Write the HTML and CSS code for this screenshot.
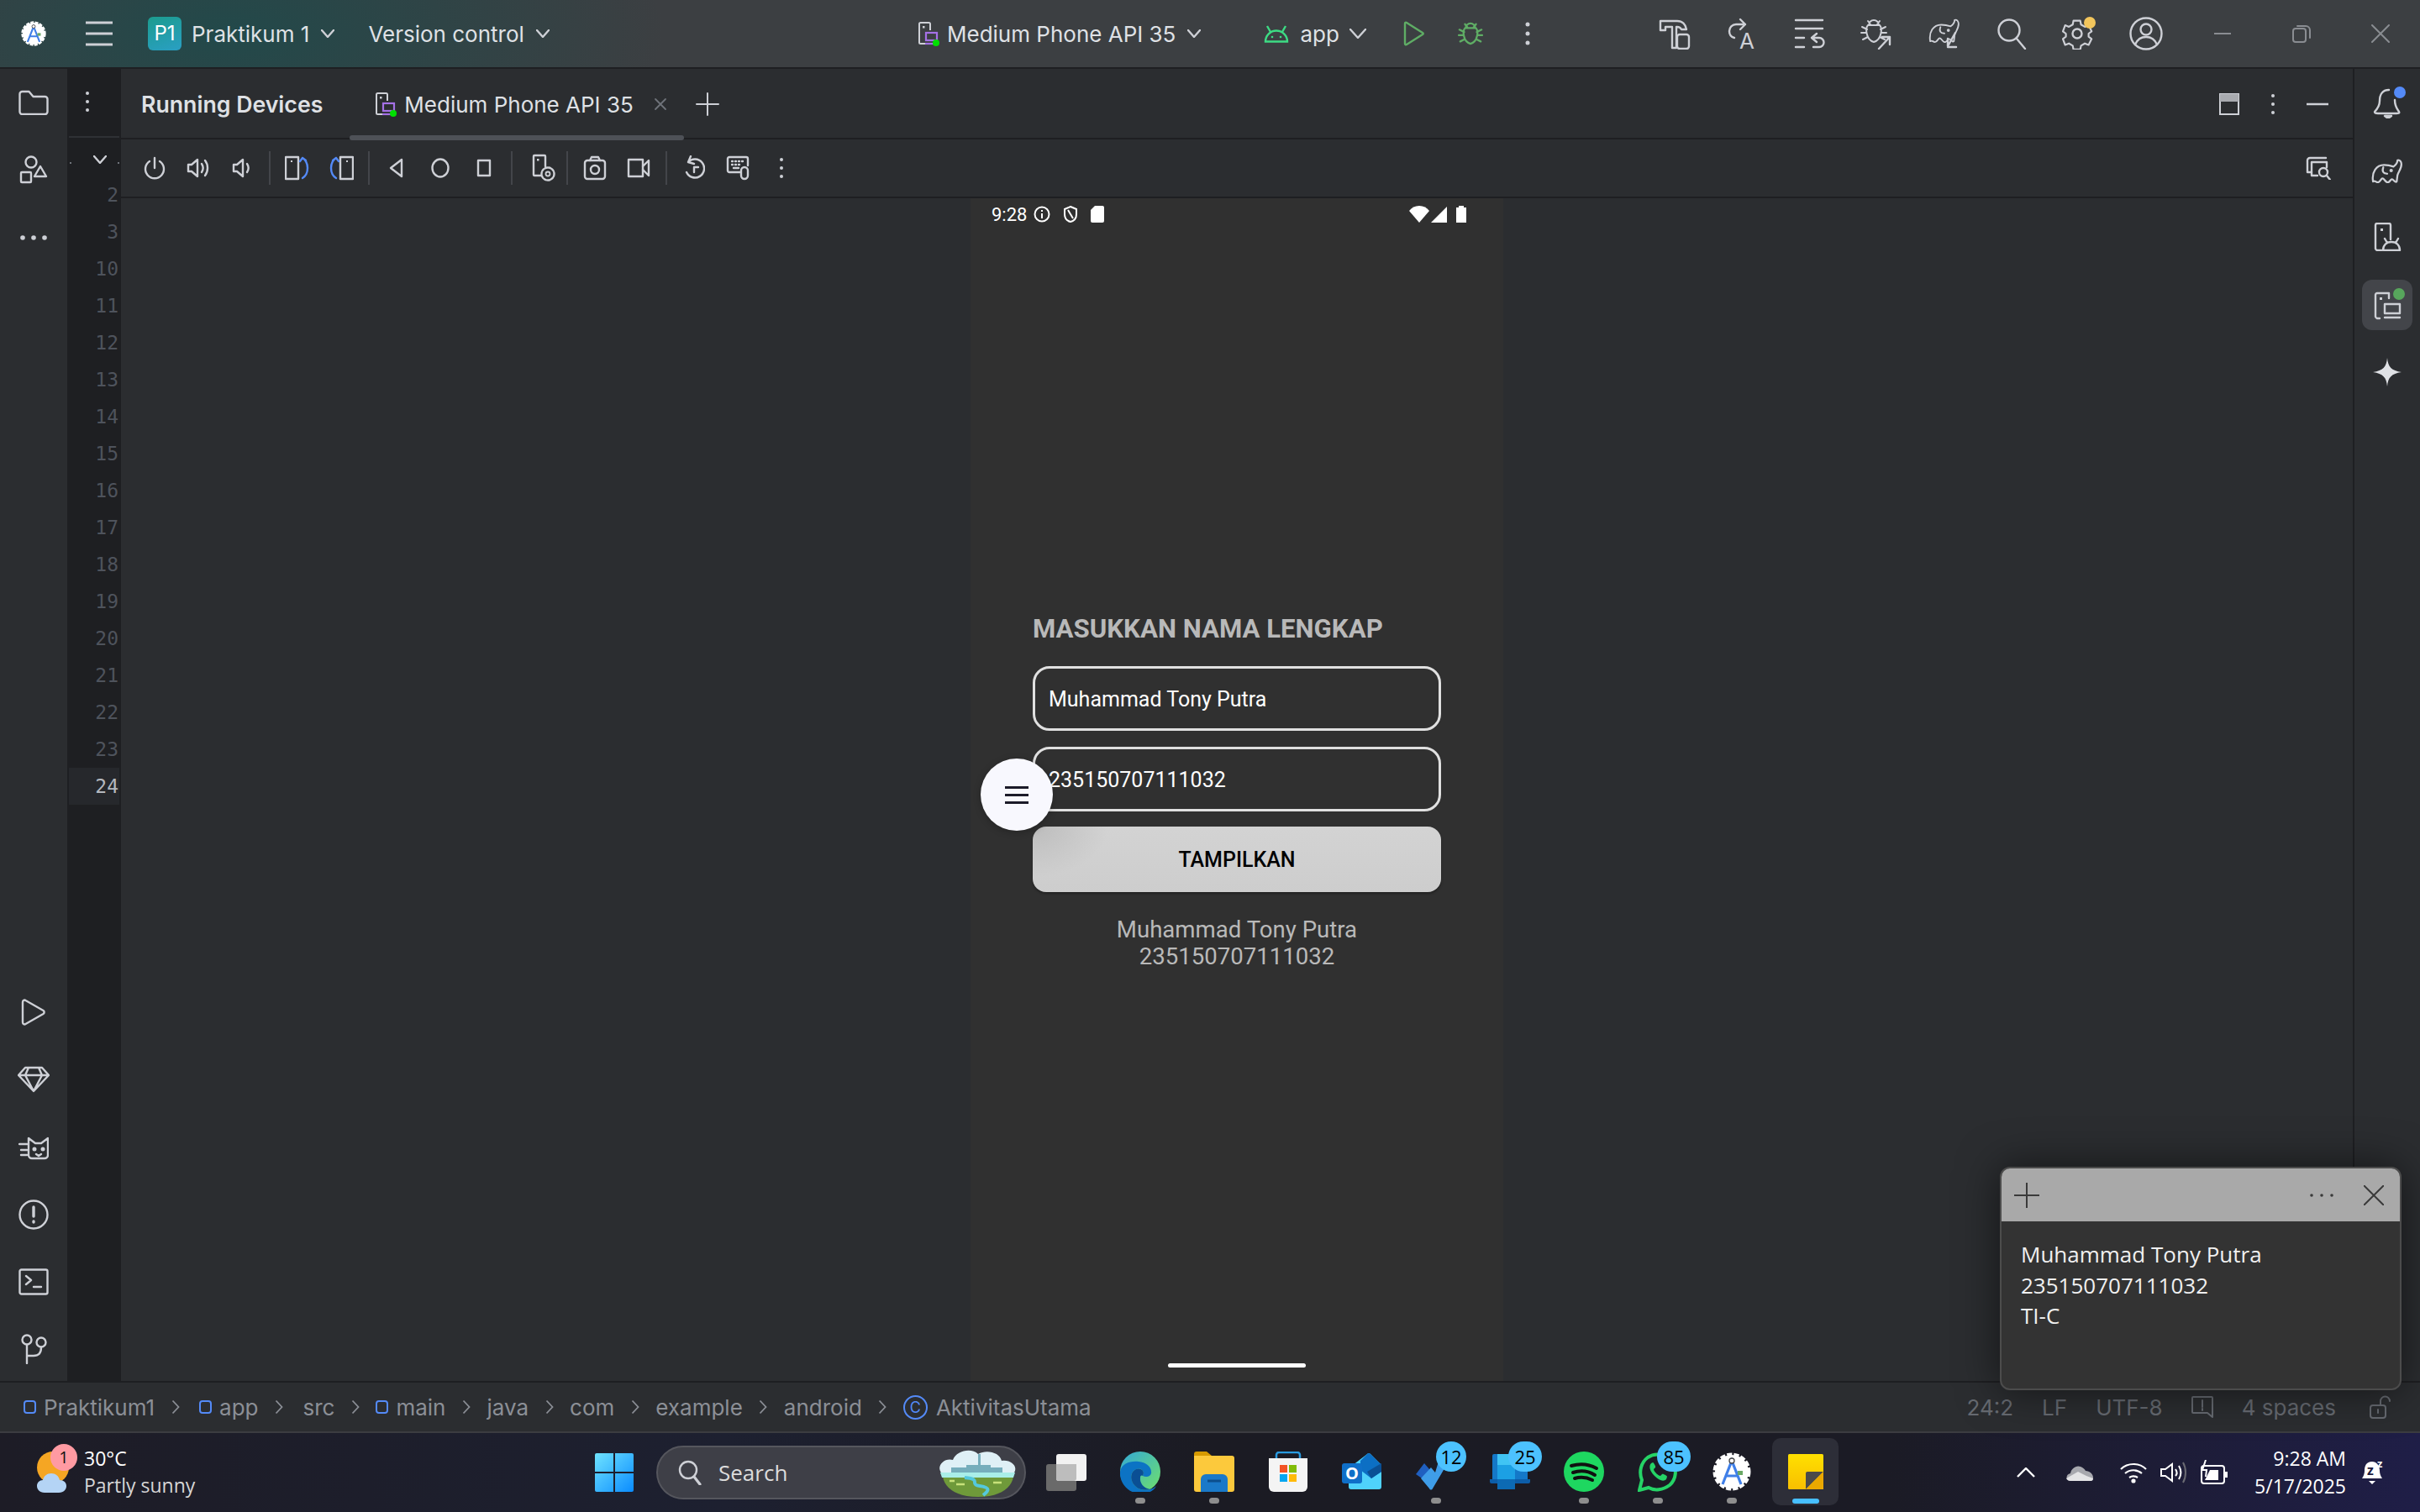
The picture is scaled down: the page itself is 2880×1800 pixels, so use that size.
FILE: index.html
```html
<!DOCTYPE html>
<html lang="en">
<head>
  <meta charset="UTF-8" />
  <title>Praktikum 1 - Running Devices</title>
  <link rel="stylesheet" href="styles.css">
</head>
<body>
  <svg class="defs" width="0" height="0">
    <symbol id="studio" viewBox="0 0 46 46">
      <circle cx="23" cy="23" r="20" fill="#fff" stroke="#fff" stroke-width="5" stroke-dasharray="6 2"/>
      <path d="M12 38 23 10l11 28M16 28h14" fill="none" stroke="#3f7fe8" stroke-width="3.200"/>
      <circle cx="23" cy="10" r="3" fill="#fff" stroke="#444" stroke-width="1.300"/>
      <rect x="30" y="22" width="6" height="5" fill="#6aa865"/>
    </symbol>
    <symbol id="device" viewBox="0 0 26 30">
      <path d="M9 27H3.500A1.500 1.500 0 0 1 2 25.500V3.500A1.500 1.500 0 0 1 3.500 2h10A1.500 1.500 0 0 1 15 3.500V11" fill="none" stroke="#ced0d6" stroke-width="2"/>
      <rect x="6" y="6" width="2.500" height="2.500" fill="#ced0d6"/>
      <rect x="10" y="14" width="13" height="9" fill="none" stroke="#a571e6" stroke-width="2.200"/>
      <path d="M9 27h11" stroke="#a571e6" stroke-width="2.200"/>
      <circle cx="22" cy="26" r="4" fill="#00e000"/>
    </symbol>
    <symbol id="gradle" viewBox="0 0 40 32">
      <path d="M2 30C0 18 6 9 16 9c5 0 9 1 12 2 3-2 5-5 5-8 3-1 5 2 5 5 0 6-4 10-5 14l-1 8c-2 2-4-3-6-3s-3 5-6 4-4-5-6-5-3 5-6 5-3-3-6-1z"/>
      <path d="M15 12c-2 5 0 8 5 8"/>
      <circle cx="25" cy="16" r="1"/>
    </symbol>
    <symbol id="bugbody" viewBox="0 0 32 32">
      <path d="M10 9a6 6 0 0 1 12 0zM9 9h14c3 3 3 17-7 20C6 26 6 12 9 9zM9 4l3 4M23 4l-3 4M2 11l6 3M30 11l-6 3M1 18h6M31 18h-6M3 26l6-3M29 26l-6-3"/>
    </symbol>
    <symbol id="gt" viewBox="0 0 10 18">
      <path d="M1.500 1.500 8.500 9l-7 7.500" fill="none" stroke="#8b8f96" stroke-width="1.800"/>
    </symbol>
  </svg>

  <header class="titlebar">
    <div class="tb-left">
      <svg class="tb-logo" width="30" height="30"><use href="#studio"/></svg>
      <svg class="ic tb-menu" width="32" height="30" viewBox="0 0 32 30"><path d="M0 2h32M0 15h32M0 28h32" stroke-width="3"/></svg>
      <span class="p1">P1</span>
      <span class="tb-text tb-project">Praktikum 1</span>
      <svg class="ic chev" width="16" height="10" viewBox="0 0 16 10"><path d="M1 1l7 8 7-8"/></svg>
      <span class="tb-text tb-vcs">Version control</span>
      <svg class="ic chev" width="16" height="10" viewBox="0 0 16 10"><path d="M1 1l7 8 7-8"/></svg>
    </div>
    <div class="tb-center">
      <svg width="26" height="30"><use href="#device"/></svg>
      <span class="tb-text tb-device">Medium Phone API 35</span>
      <svg class="ic chev" width="16" height="10" viewBox="0 0 16 10"><path d="M1 1l7 8 7-8"/></svg>
      <svg class="android" width="30" height="22" viewBox="0 0 30 22"><path d="M2 20.500a13 13 0 0 1 26 0zM8 9 4 2M22 9l4-7" fill="none" stroke="#3ddc84" stroke-width="2.400"/><circle cx="10" cy="15" r="1.300" fill="#3ddc84"/><circle cx="20" cy="15" r="1.300" fill="#3ddc84"/></svg>
      <span class="tb-text tb-app">app</span>
      <svg class="ic chev chev-app" width="20" height="12" viewBox="0 0 20 12"><path d="M1 1l9 10 9-10"/></svg>
      <svg class="ic run" width="26" height="30" viewBox="0 0 26 30"><path d="M2 3c0-1 1-1.500 2-1l19 12c1 .5 1 1.500 0 2L4 28c-1 .5-2 0-2-1z"/></svg>
      <svg class="ic bug" width="30" height="30"><use href="#bugbody"/></svg>
      <svg class="dots-v tb-more" width="6" height="28" viewBox="0 0 6 28"><circle cx="3" cy="3" r="2.500"/><circle cx="3" cy="14" r="2.500"/><circle cx="3" cy="25" r="2.500"/></svg>
    </div>
    <div class="tb-right">
      <svg class="ic act" width="38" height="38" viewBox="0 0 38 38"><path d="M2 4h20c6 0 10 4 11 10h-6c-1-2-3-3-5-3h-1v25h-5V11H8v4H2z"/><rect x="22" y="20" width="14" height="17" rx="3"/></svg>
      <svg class="ic act" width="38" height="38" viewBox="0 0 38 38"><path d="M17 2l6 6-6 6M23 8H12a8 8 0 0 0-8 8c0 4 2 7 6 8"/><text class="ic-letter" x="16" y="37">A</text></svg>
      <svg class="ic act" width="38" height="38" viewBox="0 0 38 38"><path d="M3 3h32M3 13h32M3 24h10M3 35h10M28 19l-6 5 6 5M22 24h9a5 5 0 0 1 0 11h-7"/></svg>
      <svg class="ic act thin" width="38" height="38" viewBox="0 0 38 38"><use href="#bugbody" width="32" height="32"/><path d="M22 37 35 23M26 23h9v9" stroke-width="2.400"/></svg>
      <svg class="ic act thin" width="40" height="38" viewBox="0 0 40 38"><use href="#gradle" width="40" height="30"/><path d="M33 18 24 34M24 25v10h10" stroke-width="2.400"/></svg>
      <svg class="ic act" width="36" height="38" viewBox="0 0 36 38"><circle cx="15" cy="15" r="12.500"/><path d="M24 25l10 12"/></svg>
      <span class="gear">
        <svg class="ic" width="38" height="38" viewBox="0 0 38 38"><path d="M14 3h9l1 5 5 3 5-2 4 8-4 3v4l4 3-4 8-5-2-5 3-1 5h-9l-1-5-5-3-5 2-3-8 4-3v-4l-4-3 3-8 5 2 5-3z" transform="translate(1 1) scale(.9)"/><circle cx="18" cy="19" r="5.500"/></svg>
        <i class="dot-amber"></i>
      </span>
      <svg class="ic user" width="40" height="40" viewBox="0 0 40 40"><circle cx="20" cy="20" r="18.500"/><circle cx="20" cy="15" r="6.500"/><path d="M7 33c3-7 8-9 13-9s10 2 13 9"/></svg>
      <svg class="ic win win-min" width="20" height="2" viewBox="0 0 20 2"><path d="M0 1h20" stroke-width="2"/></svg>
      <svg class="ic win" width="22" height="22" viewBox="0 0 22 22"><rect x="1" y="5" width="15" height="16" rx="3" stroke-width="2"/><path d="M6 2h10a5 5 0 0 1 5 5v9" stroke-width="2"/></svg>
      <svg class="ic win" width="22" height="22" viewBox="0 0 22 22"><path d="M1 1l20 20M21 1 1 21" stroke-width="2"/></svg>
    </div>
  </header>

  <div class="workspace">
    <nav class="strip">
      <div class="strip-top">
        <svg class="ic" width="36" height="30" viewBox="0 0 36 30"><path d="M1.500 5a3 3 0 0 1 3-3h8l5 6h14a3 3 0 0 1 3 3v15a3 3 0 0 1-3 3h-27a3 3 0 0 1-3-3z"/></svg>
        <svg class="ic" width="34" height="34" viewBox="0 0 34 34"><circle cx="14" cy="8" r="6.500"/><rect x="2" y="20" width="12" height="12" rx="1"/><path d="M25 13l7 12H18z"/></svg>
        <svg class="dots-h" width="32" height="6" viewBox="0 0 32 6"><circle cx="3" cy="3" r="2.800"/><circle cx="16" cy="3" r="2.800"/><circle cx="29" cy="3" r="2.800"/></svg>
      </div>
      <div class="strip-bottom">
        <svg class="ic" width="30" height="32" viewBox="0 0 30 32"><path d="M2 4c0-2 2-3 3.500-2l21 12c1.500 1 1.500 3 0 4L5.500 30C4 31 2 30 2 28z"/></svg>
        <svg class="ic" width="38" height="32" viewBox="0 0 38 32"><path d="M9 2h20l8 9-18 19L1 11zM1 11h36M13 2l-4 9 10 19 10-19-4-9"/></svg>
        <svg class="ic" width="36" height="28" viewBox="0 0 36 28"><path d="M12 2v20a4 4 0 0 0 4 4h15a4 4 0 0 0 4-4V2l-8 6H20zM1 9h9M3 16h7M3 22h7M21 21l3 2 3-2"/><circle cx="19" cy="15" r="1.300"/><circle cx="29" cy="15" r="1.300"/></svg>
        <svg class="ic" width="36" height="36" viewBox="0 0 36 36"><circle cx="18" cy="18" r="16.500"/><path d="M18 9v11M18 26v1" stroke-width="3.400"/></svg>
        <svg class="ic" width="36" height="32" viewBox="0 0 36 32"><rect x="1.500" y="1.500" width="33" height="29" rx="2"/><path d="M9 9l6 5-6 5M18 22h9"/></svg>
        <svg class="ic" width="32" height="36" viewBox="0 0 32 36"><circle cx="8" cy="7" r="5.500"/><circle cx="25" cy="10" r="5.500"/><path d="M8 13v22M8 26h8c6 0 9-4 9-10"/></svg>
      </div>
    </nav>

    <aside class="gutter">
      <div class="gutter-top">
        <svg class="dots-v" width="6" height="26" viewBox="0 0 6 26"><circle cx="3" cy="3" r="2"/><circle cx="3" cy="13" r="2"/><circle cx="3" cy="23" r="2"/></svg>
      </div>
      <div class="gutter-fold">
        <i class="speck"></i>
        <svg class="ic fold-chev" width="16" height="10" viewBox="0 0 16 10"><path d="M1 1l7 8 7-8"/></svg>
        <i class="speck"></i>
      </div>
      <div class="line-no">2</div>
      <div class="line-no">3</div>
      <div class="line-no">10</div>
      <div class="line-no">11</div>
      <div class="line-no">12</div>
      <div class="line-no">13</div>
      <div class="line-no">14</div>
      <div class="line-no">15</div>
      <div class="line-no">16</div>
      <div class="line-no">17</div>
      <div class="line-no">18</div>
      <div class="line-no">19</div>
      <div class="line-no">20</div>
      <div class="line-no">21</div>
      <div class="line-no">22</div>
      <div class="line-no">23</div>
      <div class="line-no current">24</div>
    </aside>

    <main class="panel">
      <div class="tabs">
        <span class="tabs-title">Running Devices</span>
        <div class="tab">
          <svg width="26" height="30"><use href="#device"/></svg>
          <span class="tab-name">Medium Phone API 35</span>
          <svg class="ic tab-close" width="16" height="16" viewBox="0 0 16 16"><path d="M2 2l12 12M14 2 2 14" stroke-width="1.800"/></svg>
          <i class="tab-bar"></i>
        </div>
        <svg class="ic tab-add" width="28" height="28" viewBox="0 0 28 28"><path d="M14 1v26M1 14h26" stroke-width="2"/></svg>
        <div class="tabs-right">
          <svg width="24" height="26" viewBox="0 0 24 26"><rect x="1" y="1" width="22" height="24" fill="none" stroke="#ced0d6" stroke-width="2"/><rect x="1" y="1" width="22" height="9" fill="#a8aaaf"/></svg>
          <svg class="dots-v" width="6" height="26" viewBox="0 0 6 26"><circle cx="3" cy="3" r="2"/><circle cx="3" cy="13" r="2"/><circle cx="3" cy="23" r="2"/></svg>
          <svg class="ic" width="26" height="4" viewBox="0 0 26 4"><path d="M0 2h26" stroke-width="2.400"/></svg>
        </div>
      </div>

      <div class="toolbar">
        <span class="tool"><svg class="ic" width="26" height="28" viewBox="0 0 26 28"><path d="M13 2v12M7 6a11 11 0 1 0 12 0"/></svg></span>
        <span class="tool"><svg class="ic" width="28" height="28" viewBox="0 0 28 28"><path d="M2 10h4l7-6v20l-7-6H2zM18 9c2 3 2 7 0 10M22 5c4 5 4 13 0 18"/></svg></span>
        <span class="tool"><svg class="ic" width="24" height="28" viewBox="0 0 24 28"><path d="M2 10h4l7-6v20l-7-6H2zM18 9c2 3 2 7 0 10"/></svg></span>
        <i class="sep"></i>
        <span class="tool"><svg class="ic" width="30" height="30" viewBox="0 0 30 30"><rect x="1" y="2" width="15" height="26"/><rect class="fill" x="7" y="6" width="2" height="2"/><path class="blue" d="M21 3c8 5 8 19 0 24M18 7l3-4 4 3"/></svg></span>
        <span class="tool"><svg class="ic" width="30" height="30" viewBox="0 0 30 30"><rect x="14" y="2" width="15" height="26"/><rect class="fill" x="21" y="6" width="2" height="2"/><path class="blue" d="M9 3C1 8 1 22 9 27M12 7 9 3 5 6"/></svg></span>
        <i class="sep"></i>
        <span class="tool"><svg class="ic" width="18" height="24" viewBox="0 0 18 24"><path d="M15 2 2 12l13 10z"/></svg></span>
        <span class="tool"><svg class="ic" width="22" height="26" viewBox="0 0 22 26"><ellipse cx="11" cy="13" rx="9.500" ry="10.500"/></svg></span>
        <span class="tool"><svg class="ic" width="18" height="22" viewBox="0 0 18 22"><rect x="2" y="2" width="14" height="18"/></svg></span>
        <i class="sep"></i>
        <span class="tool tool-shift"><svg class="ic" width="28" height="34" viewBox="0 0 28 34"><path d="M11 26H3a1 1 0 0 1-1-1V3a1 1 0 0 1 1-1h12a1 1 0 0 1 1 1v12"/><rect class="fill" x="6" y="6" width="2.500" height="2.500"/><circle cx="19" cy="24" r="2.500" stroke-width="1.800"/><circle cx="19" cy="24" r="7.500" stroke-dasharray="3 1.500" stroke-width="2.400"/></svg></span>
        <i class="sep"></i>
        <span class="tool"><svg class="ic" width="28" height="30" viewBox="0 0 28 30"><rect x="2" y="6" width="24" height="22" rx="3"/><path d="M8 6l2-4h8l2 4"/><circle cx="14" cy="17" r="5"/></svg></span>
        <span class="tool"><svg class="ic" width="28" height="24" viewBox="0 0 28 24"><rect x="2" y="2" width="17" height="20"/><path d="M19 10l7-7v18l-7-7"/></svg></span>
        <i class="sep"></i>
        <span class="tool"><svg class="ic" width="26" height="30" viewBox="0 0 26 30"><path d="M6 8a11 11 0 1 1-2 12M9 1 6 8l7 2M13 20v-6h5"/></svg></span>
        <span class="tool"><svg class="ic" width="28" height="30" viewBox="0 0 28 30"><path d="M17 20H4a2 2 0 0 1-2-2V4a2 2 0 0 1 2-2h20a2 2 0 0 1 2 2v8"/><path d="M7 7h1M11 7h1M15 7h1M19 7h1M7 11h1M11 11h1M15 11h1M9 15h6"/><rect x="18" y="14" width="8" height="14" rx="4"/></svg></span>
        <span class="tool"><svg class="dots-v" width="6" height="26" viewBox="0 0 6 26"><circle cx="3" cy="3" r="2"/><circle cx="3" cy="13" r="2"/><circle cx="3" cy="23" r="2"/></svg></span>
        <svg class="ic toolbar-end" width="30" height="28" viewBox="0 0 30 28"><path d="M7 19H2V5a3 3 0 0 1 3-3h19M7 7h18v6M7 7v16h7"/><circle cx="21" cy="19" r="5"/><path d="M25 23l4 5"/></svg>
      </div>

      <div class="stage">
        <section class="phone">
          <div class="phone-status">
            <span class="phone-time">9:28</span>
            <svg class="phone-ic" width="20" height="20" viewBox="0 0 20 20"><circle cx="10" cy="10" r="8.500" fill="none" stroke="#fff" stroke-width="2"/><path d="M10 9v6M10 5v2" stroke="#fff" stroke-width="2"/></svg>
            <svg class="phone-ic" width="18" height="20" viewBox="0 0 18 20"><path d="M9 1l7 3v6c0 5-3 8-7 9-4-1-7-4-7-9V4zM6 5l6 10" fill="none" stroke="#fff" stroke-width="2"/></svg>
            <svg class="phone-ic" width="16" height="20" viewBox="0 0 16 20"><path d="M5 0h9a2 2 0 0 1 2 2v16a2 2 0 0 1-2 2H2a2 2 0 0 1-2-2V5z" fill="#fff"/></svg>
            <svg class="phone-ic phone-wifi" width="24" height="20" viewBox="0 0 24 20"><path d="M0 6c3-4 7-6 12-6s9 2 12 6L12 20z" fill="#fff"/></svg>
            <svg class="phone-ic phone-signal" width="19" height="19" viewBox="0 0 19 19"><path d="M19 0v19H0z" fill="#fff"/></svg>
            <svg class="phone-ic phone-batt" width="12" height="20" viewBox="0 0 12 20"><path d="M3 2V0h6v2h3v18H0V2z" fill="#fff"/></svg>
          </div>
          <form class="form">
            <h1 class="form-title">MASUKKAN NAMA LENGKAP</h1>
            <div class="field">Muhammad Tony Putra</div>
            <div class="field">235150707111032</div>
            <div class="btn">TAMPILKAN</div>
            <p class="result">Muhammad Tony Putra<br>235150707111032</p>
          </form>
          <i class="home-bar"></i>
          <button class="fab" type="button"><i></i><i></i><i></i></button>
        </section>
      </div>
    </main>

    <nav class="rstrip">
      <span class="rs-item rs-bell">
        <svg class="ic" width="36" height="38" viewBox="0 0 36 38"><path d="M20 4c-8 0-11 6-11 13 0 6-3 10-6 13 0 2 2 2 4 2h22c2 0 4 0 3-2-2-3-5-6-5-14M15 35h8l-4 3z"/></svg>
        <i class="rs-dot blue-dot"></i>
      </span>
      <svg class="ic rs-item" width="40" height="30"><use href="#gradle"/></svg>
      <svg class="ic rs-item" width="34" height="34" viewBox="0 0 34 34"><path d="M10 33H5a3 3 0 0 1-2-2V3a2 2 0 0 1 2-2h14a2 2 0 0 1 2 2v17"/><rect class="fill" x="9" y="7" width="3" height="3"/><path d="M12 33c0-6 4-10 10-10s10 4 10 10zM17 24l-3-5M27 24l3-5"/></svg>
      <span class="rs-item rs-active">
        <svg class="ic" width="34" height="36" viewBox="0 0 34 36"><path d="M8 34H5a3 3 0 0 1-2-2V6a2 2 0 0 1 2-2h14v6"/><rect class="fill" x="8" y="9" width="3" height="3"/><rect x="14" y="17" width="18" height="11"/><path d="M14 33h18"/></svg>
        <i class="rs-dot green-dot"></i>
      </span>
      <svg class="rs-item rs-star" width="34" height="34" viewBox="0 0 34 34"><path d="M17 0c1 11 5 15 17 17-12 2-16 6-17 17-1-11-5-15-17-17 12-2 16-6 17-17z" fill="#dfe1e5"/></svg>
    </nav>
  </div>

  <footer class="statusbar">
    <div class="crumbs">
      <span class="crumb"><i class="mod"></i>Praktikum1</span><svg width="10" height="18"><use href="#gt"/></svg>
      <span class="crumb"><i class="mod"></i>app</span><svg width="10" height="18"><use href="#gt"/></svg>
      <span class="crumb">src</span><svg width="10" height="18"><use href="#gt"/></svg>
      <span class="crumb"><i class="mod"></i>main</span><svg width="10" height="18"><use href="#gt"/></svg>
      <span class="crumb">java</span><svg width="10" height="18"><use href="#gt"/></svg>
      <span class="crumb">com</span><svg width="10" height="18"><use href="#gt"/></svg>
      <span class="crumb">example</span><svg width="10" height="18"><use href="#gt"/></svg>
      <span class="crumb">android</span><svg width="10" height="18"><use href="#gt"/></svg>
      <span class="crumb"><i class="cls">C</i>AktivitasUtama</span>
    </div>
    <div class="status-right">
      <span>24:2</span>
      <span>LF</span>
      <span>UTF-8</span>
      <svg class="ic dim" width="26" height="26" viewBox="0 0 26 26"><path d="M2 1h22a1 1 0 0 1 1 1v23l-6-5H2a1 1 0 0 1-1-1V2a1 1 0 0 1 1-1zM13 5v8M13 15v2"/></svg>
      <span>4 spaces</span>
      <svg class="ic dim lock" width="26" height="28" viewBox="0 0 26 28"><rect x="1" y="12" width="18" height="15" rx="3"/><path d="M13 12V7a5.500 5.500 0 0 1 11 0M10 17v4"/></svg>
    </div>
  </footer>

  <div class="taskbar">
    <div class="weather">
      <svg width="42" height="52" viewBox="0 0 42 52"><circle cx="20" cy="20" r="19" fill="#f5a623"/><path d="M10 50c-6 0-9-4-9-8s3-7 7-7c1-5 5-8 10-8s9 3 10 8c5 0 8 3 8 7s-3 8-9 8z" fill="#b4d4f5"/></svg>
      <i class="weather-badge">1</i>
      <div class="weather-text">
        <div class="w-temp">30°C</div>
        <div class="w-desc">Partly sunny</div>
      </div>
    </div>
    <svg class="start" width="46" height="46" viewBox="0 0 46 46">
      <defs><linearGradient id="wg" x1="0" y1="0" x2="1" y2="1"><stop offset="0" stop-color="#6fe3ff"/><stop offset="1" stop-color="#0a8cff"/></linearGradient></defs>
      <path d="M0 2a2 2 0 0 1 2-2h20v22H0zM24 0h20a2 2 0 0 1 2 2v20H24zM0 24h22v22H2a2 2 0 0 1-2-2zM24 24h22v20a2 2 0 0 1-2 2H24z" fill="url(#wg)"/>
    </svg>
    <div class="search">
      <svg class="ic search-ic" width="28" height="30" viewBox="0 0 28 30"><circle cx="12" cy="12" r="10"/><path d="M19 20l7 9" stroke-width="3.200"/></svg>
      <span class="search-text">Search</span>
      <svg class="search-art" width="95" height="57" viewBox="0 0 95 57">
        <path d="M4 28C-2 20 8 10 18 13 22 2 40-2 48 6c10-6 26-2 28 8 10-2 20 6 15 14z" fill="#dff0f6"/>
        <path d="M16 28v-6h18v-3h14V6h3v13h12v3h14v6z" fill="#76aebc"/>
        <path d="M6 33h84c-2 12-14 24-42 24S8 45 6 33z" fill="#6f9a3a"/>
        <path d="M3 28h89l-2 6H5z" fill="#a9eee8"/>
        <path d="M32 34c22 2 4 8 18 10s10 6 4 11" fill="none" stroke="#55c9dd" stroke-width="4"/>
        <path d="M22 42h10M66 40h10M14 38h6" stroke="#c8e27a" stroke-width="2.500"/>
      </svg>
    </div>
    <svg class="taskview" width="48" height="44" viewBox="0 0 48 44">
      <rect y="12" width="36" height="32" rx="3" fill="#6a6a6a"/>
      <rect x="12" width="36" height="32" rx="3" fill="#f2f2f2"/>
      <path d="M12 12h24v17a3 3 0 0 1-3 3H15a3 3 0 0 1-3-3z" fill="#bdbdbd"/>
    </svg>
    <div class="apps">
      <div class="app">
        <svg width="48" height="48" viewBox="0 0 48 48">
          <defs><linearGradient id="eg1" x1="0" y1="0" x2="1" y2="1"><stop offset="0" stop-color="#33a9d8"/><stop offset="1" stop-color="#6fe06a"/></linearGradient></defs>
          <circle cx="24" cy="24" r="24" fill="url(#eg1)"/>
          <path d="M0 24C2 14 12 11 22 12c9 1 16 6 15 14-1 4-6 5-10 3 3-6-2-10-8-8-5 2-7 8-5 14 2 6 9 13 22 10 3-1 5-2 7-4-4 8-12 9-19 9C10 50-1 38 0 24z" fill="#0c73c4"/>
          <path d="M19 21c-5 2-7 8-5 14 2 6 9 13 22 10-8-1-13-8-12-14 0-2 1-3 3-2 3-6-2-10-8-8z" fill="#0a4f94"/>
        </svg>
        <i class="run-dot"></i>
      </div>
      <div class="app">
        <svg width="48" height="48" viewBox="0 0 48 48">
          <path d="M0 3a3 3 0 0 1 3-3h12l6 5H0z" fill="#d69a00"/>
          <path d="M0 5h45a3 3 0 0 1 3 3v37a3 3 0 0 1-3 3H3a3 3 0 0 1-3-3z" fill="#fcc93c"/>
          <path d="M8 48V33a6 6 0 0 1 6-6h20a6 6 0 0 1 6 6v15z" fill="#1a79c8"/>
          <path d="M16 35h16" stroke="#0c4f8c" stroke-width="3"/>
        </svg>
        <i class="run-dot"></i>
      </div>
      <div class="app">
        <svg width="46" height="48" viewBox="0 0 46 48">
          <path d="M9 8V4a3 3 0 0 1 3-3h22a3 3 0 0 1 3 3v4" fill="none" stroke="#2a9be0" stroke-width="2.500"/>
          <path d="M0 8h46v34a6 6 0 0 1-6 6H6a6 6 0 0 1-6-6z" fill="#f4f4f4"/>
          <rect x="13" y="16" width="9" height="9" fill="#f35325"/>
          <rect x="24" y="16" width="9" height="9" fill="#81bc06"/>
          <rect x="13" y="27" width="9" height="9" fill="#05a6f0"/>
          <rect x="24" y="27" width="9" height="9" fill="#ffba08"/>
        </svg>
      </div>
      <div class="app">
        <svg width="48" height="44" viewBox="0 0 48 44">
          <path d="M8 18 30 1a3 3 0 0 1 4 0l13 13v26a3 3 0 0 1-3 3H11a3 3 0 0 1-3-3z" fill="#4fd2fb"/>
          <path d="M22 9 30 1a3 3 0 0 1 4 0l13 13v8l-12 8-13-10z" fill="#0c6fc4"/>
          <path d="M30 22 47 12v10L35 30z" fill="#0a4f94"/>
          <rect y="12" width="24" height="24" rx="3" fill="#0f6fc8"/>
        </svg>
        <span class="outlook-o">O</span>
      </div>
      <div class="app app-todo">
        <svg width="40" height="44" viewBox="0 0 40 44">
          <path d="M0 25 10 12l12 14-6 10z" fill="#1f5fc0"/>
          <path d="M40 8 20 42c-1 2-3 2-4 0L6 30 18 17l5 6L30 0z" fill="#3f9de8"/>
        </svg>
        <i class="run-dot"></i>
        <i class="count count-12">12</i>
      </div>
      <div class="app">
        <svg width="48" height="42" viewBox="0 0 48 42">
          <rect x="3" y="0" width="42" height="33" rx="2" fill="#1478c8"/>
          <path d="M0 30h48v3a2 2 0 0 1-2 2H2a2 2 0 0 1-2-2z" fill="#0c5da8"/>
          <rect x="9" y="0" width="21" height="42" rx="2" fill="#1ca0e4"/>
          <rect x="9" y="0" width="21" height="13" fill="#40c4f4"/>
          <rect x="9" y="30" width="21" height="12" fill="#0c6ab4"/>
        </svg>
        <i class="count count-25">25</i>
      </div>
      <div class="app">
        <svg width="48" height="48" viewBox="0 0 48 48">
          <circle cx="24" cy="24" r="24" fill="#1ed760"/>
          <path d="M9 17c10-3 21-2 30 3M11 25c9-3 18-2 26 3M13 32c7-2 15-1 21 2" fill="none" stroke="#101010" stroke-width="4" stroke-linecap="round"/>
        </svg>
        <i class="run-dot"></i>
      </div>
      <div class="app">
        <svg width="48" height="48" viewBox="0 0 48 48">
          <path d="M2 46l3-12C1 24 4 13 12 7c9-6 22-4 29 5 6 9 5 21-3 28-8 6-18 7-25 3z" fill="none" stroke="#25d366" stroke-width="4"/>
          <path d="M16 14c-3 3-2 9 4 15s11 7 14 4l1-3c0-1-5-4-6-3l-2 2c-2 0-8-5-8-8l2-2c1-1-2-6-3-6z" fill="#25d366"/>
        </svg>
        <i class="run-dot"></i>
        <i class="count count-85">85</i>
      </div>
      <div class="app">
        <svg width="46" height="46"><use href="#studio"/></svg>
        <i class="run-dot"></i>
      </div>
      <div class="app app-on">
        <svg width="42" height="42" viewBox="0 0 42 42">
          <defs><linearGradient id="sn" x1="0" y1="0" x2="0" y2="1"><stop offset="0" stop-color="#ffe000"/><stop offset="1" stop-color="#f8bf00"/></linearGradient></defs>
          <rect width="42" height="42" rx="1.500" fill="url(#sn)"/>
          <path d="M21 42V23a2 2 0 0 1 2-2h19z" fill="#4a4a4a"/>
          <path d="M21 42 42 21v21z" fill="#eaa800"/>
        </svg>
        <i class="run-bar"></i>
      </div>
    </div>
    <div class="tray">
      <svg class="tray-up" width="22" height="12" viewBox="0 0 22 12"><path d="M1 11 11 1l10 10" fill="none" stroke="#fff" stroke-width="2.400"/></svg>
      <svg class="tray-cloud" width="32" height="20" viewBox="0 0 32 20"><path d="M5 20c-6 0-6-8 0-9 1-6 7-10 12-8 3 1 5 3 6 5 5 0 9 4 9 8 0 2-1 4-3 4z" fill="#a7a8ae"/><path d="M0 17 14 9l10 5 8 3c0 2-1 3-3 3H5c-2 0-4-1-5-3z" fill="#e4e4e6"/></svg>
      <svg class="tray-wifi" width="32" height="26" viewBox="0 0 32 26"><path d="M1 9c8-8 22-8 30 0M6 14c6-5 14-5 20 0M11 19c3-2 7-2 10 0" fill="none" stroke="#fff" stroke-width="2.200"/><circle cx="16" cy="23" r="2.600" fill="#fff"/></svg>
      <svg class="tray-vol" width="32" height="26" viewBox="0 0 32 26"><path d="M1 9h5l8-6v20l-8-6H1zM18 9c2 3 2 6 0 8M22 5c3 5 3 11 0 16" fill="none" stroke="#fff" stroke-width="2"/><path d="M27 1c4 7 4 17 0 24" fill="none" stroke="#6a6a72" stroke-width="2"/></svg>
      <svg class="tray-batt" width="32" height="30" viewBox="0 0 32 30"><rect x="1" y="7" width="27" height="21" rx="3" fill="none" stroke="#fff" stroke-width="2"/><path d="M28 14h4v7h-4z" fill="#fff"/><path d="M5 24l6-12h10v12z" fill="#fff"/><path d="M6 0 2 12h5l-1 8" fill="none" stroke="#fff" stroke-width="2"/></svg>
      <div class="clock">
        <div>9:28 AM</div>
        <div>5/17/2025</div>
      </div>
      <svg class="tray-bell" width="27" height="32" viewBox="0 0 27 32"><path d="M12 3c-7 0-9 5-9 11 0 3-1 6-3 9h24c-2-3-3-6-3-9 0-7-4-11-9-11zM8 26h8l-4 4z" fill="#fff"/><text class="bell-z" x="6" y="19">z</text><text class="bell-z2" x="18" y="10">z</text></svg>
    </div>
  </div>

  <aside class="note">
    <div class="note-head">
      <svg class="note-ic" width="30" height="30" viewBox="0 0 30 30"><path d="M15 0v30M0 15h30"/></svg>
      <svg class="note-more" width="28" height="4" viewBox="0 0 28 4"><circle cx="2" cy="2" r="1.800"/><circle cx="14" cy="2" r="1.800"/><circle cx="26" cy="2" r="1.800"/></svg>
      <svg class="note-ic note-close" width="24" height="24" viewBox="0 0 24 24"><path d="M0 0l24 24M24 0 0 24"/></svg>
    </div>
    <div class="note-body">
      <div>Muhammad Tony Putra</div>
      <div>235150707111032</div>
      <div>TI-C</div>
    </div>
  </aside>
</body>
</html>
```

FILE: styles.css
```css
* {
  box-sizing: border-box;
}
html, body {
  margin: 0;
  height: 100%;
}
body {
  width: 2880px;
  height: 1800px;
  overflow: hidden;
  position: relative;
  display: flex;
  flex-direction: column;
  background: #2b2d30;
  font-family: 'Inter', sans-serif;
  color: #dfe1e5;
}
i {
  font-style: normal;
}
svg {
  display: block;
  flex: none;
}
.defs {
  position: absolute;
}
.ic {
  fill: none;
  stroke: #ced0d6;
  stroke-width: 2.400;
  stroke-linecap: round;
  stroke-linejoin: round;
}
.ic.thin {
  stroke-width: 2;
}
.ic .fill {
  fill: #ced0d6;
  stroke: none;
}
.ic .blue {
  stroke: #548af7;
}
.ic-letter {
  font: 26px 'Inter', sans-serif;
  fill: #ced0d6;
  stroke: none;
}
.dots-v, .dots-h {
  fill: #ced0d6;
}

/* title bar */
.titlebar {
  height: 82px;
  flex: none;
  display: grid;
  grid-template-columns: 1092px 882px 1fr;
  align-items: center;
  border-bottom: 2px solid #1e1f22;
  background: radial-gradient(ellipse 520px 220px at 270px 40px, #22494a 0%, rgba(34,73,74,0) 100%), #3c3f42;
}
.tb-left, .tb-center, .tb-right {
  display: flex;
  align-items: center;
  height: 80px;
}
.tb-logo {
  margin-left: 25px;
}
.tb-menu {
  margin-left: 47px;
}
.p1 {
  width: 40px;
  height: 40px;
  margin-left: 42px;
  border-radius: 6px;
  background: linear-gradient(160deg, #1c9c8e, #2a9fc4);
  color: #fff;
  font-size: 24px;
  line-height: 40px;
  text-align: center;
}
.tb-text {
  font-size: 26px;
  line-height: 38px;
  padding-top: 2px;
  color: #dfe1e5;
  white-space: nowrap;
}
.tb-project {
  margin-left: 12px;
}
.chev {
  margin-left: 14px;
}
.tb-vcs {
  margin-left: 40px;
}
.tb-device {
  margin-left: 9px;
}
.chev + .android {
  margin-left: 75px;
}
.tb-app {
  margin-left: 13px;
}
.chev-app {
  margin-left: 12px;
}
.run {
  margin-left: 44px;
  stroke: #5fad65;
}
.bug {
  margin-left: 39px;
  stroke: #5fad65;
  stroke-width: 2.400;
}
.tb-more {
  margin-left: 50px;
}
.tb-right .act, .gear {
  margin-right: 42px;
}
.gear {
  position: relative;
  display: block;
  width: 38px;
  height: 38px;
}
.dot-amber {
  position: absolute;
  top: -1px;
  right: -2px;
  width: 14px;
  height: 14px;
  border-radius: 50%;
  background: #f2c55c;
}
.user {
  margin-right: 61px;
}
.win {
  stroke: #8a8d92;
  margin-right: 72px;
}
.win-min {
  margin-right: 73px;
}

/* middle area */
.workspace {
  flex: 1;
  display: flex;
  min-height: 0;
}
.strip {
  width: 80px;
  flex: none;
  display: flex;
  flex-direction: column;
  justify-content: space-between;
  align-items: center;
  padding: 25px 0 20px;
}
.strip-top {
  display: flex;
  flex-direction: column;
  align-items: center;
  gap: 48px;
}
.strip-top .dots-h {
  margin-top: 13px;
}
.strip-bottom {
  display: flex;
  flex-direction: column;
  align-items: center;
  gap: 46px;
}
.strip-bottom svg:nth-child(1) {
  margin-bottom: 2px;
}
.strip-bottom svg:nth-child(2) {
  margin-bottom: 6px;
}
.strip-bottom svg:nth-child(3) {
  margin-bottom: 1px;
}
.gutter {
  width: 64px;
  flex: none;
  background: #1e1f22;
  padding: 0 2px;
}
.gutter-top {
  height: 82px;
  display: flex;
  align-items: center;
  padding: 0 0 2px 19px;
  border-bottom: 2px solid #2f3135;
}
.gutter-fold {
  height: 46px;
  display: flex;
  justify-content: space-between;
  align-items: flex-start;
  padding: 21px 0 0 1px;
}
.fold-chev {
  margin-left: 12px;
}
.speck {
  width: 2px;
  height: 2px;
  margin-top: 8px;
  background: #6f737a;
}
.line-no {
  height: 44px;
  padding-right: 1px;
  font: 23px/44px 'DejaVu Sans Mono', monospace;
  color: #4e535c;
  text-align: right;
}
.line-no.current {
  background: #26282c;
  color: #b4b8bf;
}
.panel {
  flex: 1;
  min-width: 0;
  display: flex;
  flex-direction: column;
}
.tabs {
  height: 84px;
  flex: none;
  display: flex;
  align-items: center;
  padding: 2px 29px 0 24px;
  border-bottom: 2px solid #1e1f22;
}
.tabs-title {
  font-size: 26.700px;
  font-weight: 600;
  color: #dfe1e5;
}
.tab {
  position: relative;
  display: flex;
  align-items: center;
  height: 80px;
  margin-left: 62px;
}
.tab-name {
  margin-left: 9px;
  font-size: 26px;
  color: #dfe1e5;
  white-space: nowrap;
}
.tab-close {
  margin-left: 24px;
  stroke: #6f737a;
}
.tab-bar {
  position: absolute;
  left: -30px;
  bottom: -3px;
  width: 398px;
  height: 6px;
  border-radius: 3px;
  background: #4e5157;
}
.tab-add {
  margin-left: 34px;
}
.tabs-right {
  margin-left: auto;
  display: flex;
  align-items: center;
  gap: 37px;
}
.toolbar {
  height: 70px;
  flex: none;
  display: flex;
  align-items: center;
  padding: 0 26px 0 14px;
  border-bottom: 2px solid #1e1f22;
}
.tool {
  width: 52px;
  display: flex;
  justify-content: center;
}
.tool-shift svg {
  margin-left: 10px;
}
.sep {
  width: 14px;
  height: 40px;
  background: linear-gradient(#43454a, #43454a) center / 2px 100% no-repeat;
}
.toolbar-end {
  margin-left: auto;
}

/* emulator */
.stage {
  flex: 1;
  min-height: 0;
  padding-left: 1011px;
}
.phone {
  position: relative;
  width: 634px;
  height: 100%;
  display: flex;
  flex-direction: column;
  background: #303030;
  font-family: 'Roboto', sans-serif;
}
.phone-status {
  height: 38px;
  flex: none;
  display: flex;
  align-items: center;
  padding: 0 44px 0 25px;
  color: #fff;
}
.phone-time {
  font-size: 22px;
  margin-right: 8px;
}
.phone-ic {
  margin-right: 15px;
}
.phone-wifi {
  margin-left: auto;
  margin-right: 2px;
}
.phone-signal {
  margin-right: 11px;
}
.phone-batt {
  margin-right: 0;
}
.form {
  margin: 455px 0 0 74px;
  width: 486px;
}
.form-title {
  margin: 0 0 24px;
  font-size: 31.200px;
  line-height: 40px;
  font-weight: 700;
  color: #b9b9b9;
  white-space: nowrap;
}
.field {
  height: 77px;
  margin-bottom: 19px;
  padding-left: 16px;
  border: 3px solid #e0e0e0;
  border-radius: 20px;
  color: #fff;
  font-size: 25px;
  line-height: 73px;
}
.btn {
  height: 78px;
  margin-top: -1px;
  border-radius: 16px;
  background: radial-gradient(ellipse 90px 60px at 0 0, #bcbcbc, rgba(188,188,188,0)), linear-gradient(#d3d3d3, #cdcdcd);
  box-shadow: 0 2px 3px rgba(0,0,0,.3);
  color: #000;
  font-size: 25px;
  font-weight: 500;
  line-height: 80px;
  text-align: center;
}
.result {
  margin: 29px 0 0;
  font-size: 27.600px;
  line-height: 32px;
  color: #b9b9b9;
  text-align: center;
}
.home-bar {
  margin: auto auto 16px;
  width: 164px;
  height: 5px;
  border-radius: 3px;
  background: #fff;
}
.fab {
  position: absolute;
  left: 12px;
  top: 667px;
  width: 86px;
  height: 86px;
  padding: 0;
  border: 0;
  border-radius: 50%;
  background: #f8f8fe;
  box-shadow: 0 2px 8px rgba(0,0,0,.25);
  display: flex;
  flex-direction: column;
  align-items: center;
  justify-content: center;
  gap: 6px;
}
.fab i {
  width: 28px;
  height: 3px;
  background: #1c1b29;
}

/* right strip */
.rstrip {
  width: 80px;
  flex: none;
  border-left: 2px solid #1e1f22;
  display: flex;
  flex-direction: column;
  align-items: center;
  padding: 21px 0 0;
}
.rs-item {
  margin-bottom: 47px;
}
.rs-bell {
  position: relative;
  display: block;
  width: 36px;
  height: 38px;
}
.rs-dot {
  position: absolute;
  width: 14px;
  height: 14px;
  border-radius: 50%;
}
.blue-dot {
  top: 0;
  right: -4px;
  background: #548af7;
}
.rs-active {
  position: relative;
  display: flex;
  align-items: center;
  justify-content: center;
  width: 60px;
  height: 60px;
  margin: -13px 0 33px;
  border-radius: 12px;
  background: #43454a;
}
.green-dot {
  top: 10px;
  right: 9px;
  background: #57a65c;
}

/* status bar */
.statusbar {
  height: 62px;
  flex: none;
  display: flex;
  align-items: center;
  justify-content: space-between;
  border-top: 2px solid #1e1f22;
  border-bottom: 2px solid #3b3c40;
  padding: 0 34px 0 28px;
  font-size: 26px;
  color: #8b8f96;
}
.crumbs {
  display: flex;
  align-items: center;
  gap: 19.500px;
}
.crumbs svg:nth-child(2), .crumbs svg:nth-child(4) {
  margin-right: 4px;
}
.crumb {
  display: flex;
  align-items: center;
  white-space: nowrap;
}
.mod {
  width: 15px;
  height: 16px;
  margin-right: 9px;
  border: 2px solid #548af7;
  border-radius: 4px;
}
.cls {
  width: 29px;
  height: 29px;
  margin-right: 10px;
  border: 2px solid #548af7;
  border-radius: 50%;
  color: #548af7;
  font-size: 18px;
  line-height: 25px;
  text-align: center;
}
.status-right {
  display: flex;
  align-items: center;
  gap: 34px;
  color: #666a71;
}
.dim {
  stroke: #666a71;
  stroke-width: 2;
}
.lock {
  margin-left: 6px;
}

/* taskbar */
.taskbar {
  height: 94px;
  flex: none;
  display: flex;
  align-items: center;
  background: linear-gradient(90deg, #1d1c26 0, #1d2030 30%, #1b1b23 50%, #1b1b25 78%, #1f1e47 100%);
  font-family: 'Open Sans', sans-serif;
  color: #fff;
}
.weather {
  position: relative;
  width: 708px;
  height: 94px;
  display: flex;
  align-items: center;
  padding-left: 43px;
}
.weather-badge {
  position: absolute;
  left: 60px;
  top: 13px;
  width: 32px;
  height: 32px;
  border-radius: 50%;
  background: #ff9aa2;
  color: #111;
  font-size: 20px;
  line-height: 32px;
  text-align: center;
}
.weather-text {
  margin: 0 0 2px 15px;
  font-size: 23px;
  line-height: 32px;
}
.w-desc {
  color: #d6d6d6;
}
.search {
  width: 440px;
  height: 64px;
  margin-left: 27px;
  display: flex;
  align-items: center;
  padding: 0 8px 0 24px;
  border: 2px solid #55565d;
  border-radius: 32px;
  background: #3e3f47;
}
.search-text {
  margin-left: 20px;
  font-size: 26px;
  color: #dcdcdc;
}
.search-art {
  margin-left: auto;
}
.taskview {
  margin-left: 24px;
}
.apps {
  display: flex;
  margin-left: 20px;
}
.app {
  position: relative;
  width: 88px;
  height: 94px;
  display: flex;
  flex-direction: column;
  align-items: center;
  justify-content: center;
  padding-bottom: 2px;
}
.app-todo svg {
  margin-right: 8px;
}
.run-dot {
  position: absolute;
  left: 38px;
  bottom: 10px;
  width: 12px;
  height: 7px;
  border-radius: 4px;
  background: #8e8e8e;
}
.app-on::before {
  content: '';
  position: absolute;
  left: 4px;
  right: 5px;
  top: 6px;
  bottom: 8px;
  border-radius: 10px;
  background: #2d2e38;
}
.app-on svg {
  position: relative;
}
.run-bar {
  position: absolute;
  left: 28px;
  bottom: 10px;
  width: 32px;
  height: 6px;
  border-radius: 3px;
  background: #47bfff;
}
.outlook-o {
  position: absolute;
  left: 20px;
  top: 36px;
  width: 24px;
  color: #fff;
  font-size: 20px;
  font-weight: 700;
  line-height: 24px;
  text-align: center;
}
.count {
  position: absolute;
  top: 10px;
  height: 36px;
  border-radius: 18px;
  background: #4cc2ff;
  color: #000;
  font-size: 22px;
  line-height: 36px;
  text-align: center;
}
.count-12 {
  left: 44px;
  width: 36px;
}
.count-25 {
  left: 42px;
  width: 40px;
}
.count-85 {
  left: 43px;
  width: 40px;
}
.tray {
  margin-left: auto;
  display: flex;
  align-items: center;
  padding-right: 42px;
}
.tray-cloud {
  margin-left: 37px;
}
.tray-wifi {
  margin-left: 32px;
}
.tray-vol {
  margin-left: 16px;
}
.tray-batt {
  margin-left: 16px;
}
.clock {
  width: 141px;
  font-size: 23px;
  line-height: 33px;
  text-align: right;
}
.tray-bell {
  margin-left: 19px;
}
.bell-z {
  font: 700 16px 'Open Sans', sans-serif;
  fill: #1d1c40;
}
.bell-z2 {
  font: 700 13px 'Open Sans', sans-serif;
  fill: #fff;
}

/* sticky note over the IDE */
.note {
  position: absolute;
  left: 2380px;
  top: 1389px;
  width: 478px;
  height: 266px;
  overflow: hidden;
  border: 2px solid #4c4c4c;
  border-radius: 12px;
  background: #333;
  box-shadow: 0 0 50px rgba(0,0,0,.55);
  font-family: 'Open Sans', sans-serif;
}
.note-head {
  height: 63px;
  display: flex;
  align-items: center;
  padding: 0 19px 0 15px;
  background: #a9a9a9;
}
.note-ic {
  stroke: #3a3a3a;
  stroke-width: 2;
}
.note-more {
  margin: 0 36px 0 auto;
  fill: #3a3a3a;
}
.note-body {
  padding: 21px 0 0 23px;
  font-size: 26px;
  line-height: 36.700px;
  color: #f0f0f0;
}
```
